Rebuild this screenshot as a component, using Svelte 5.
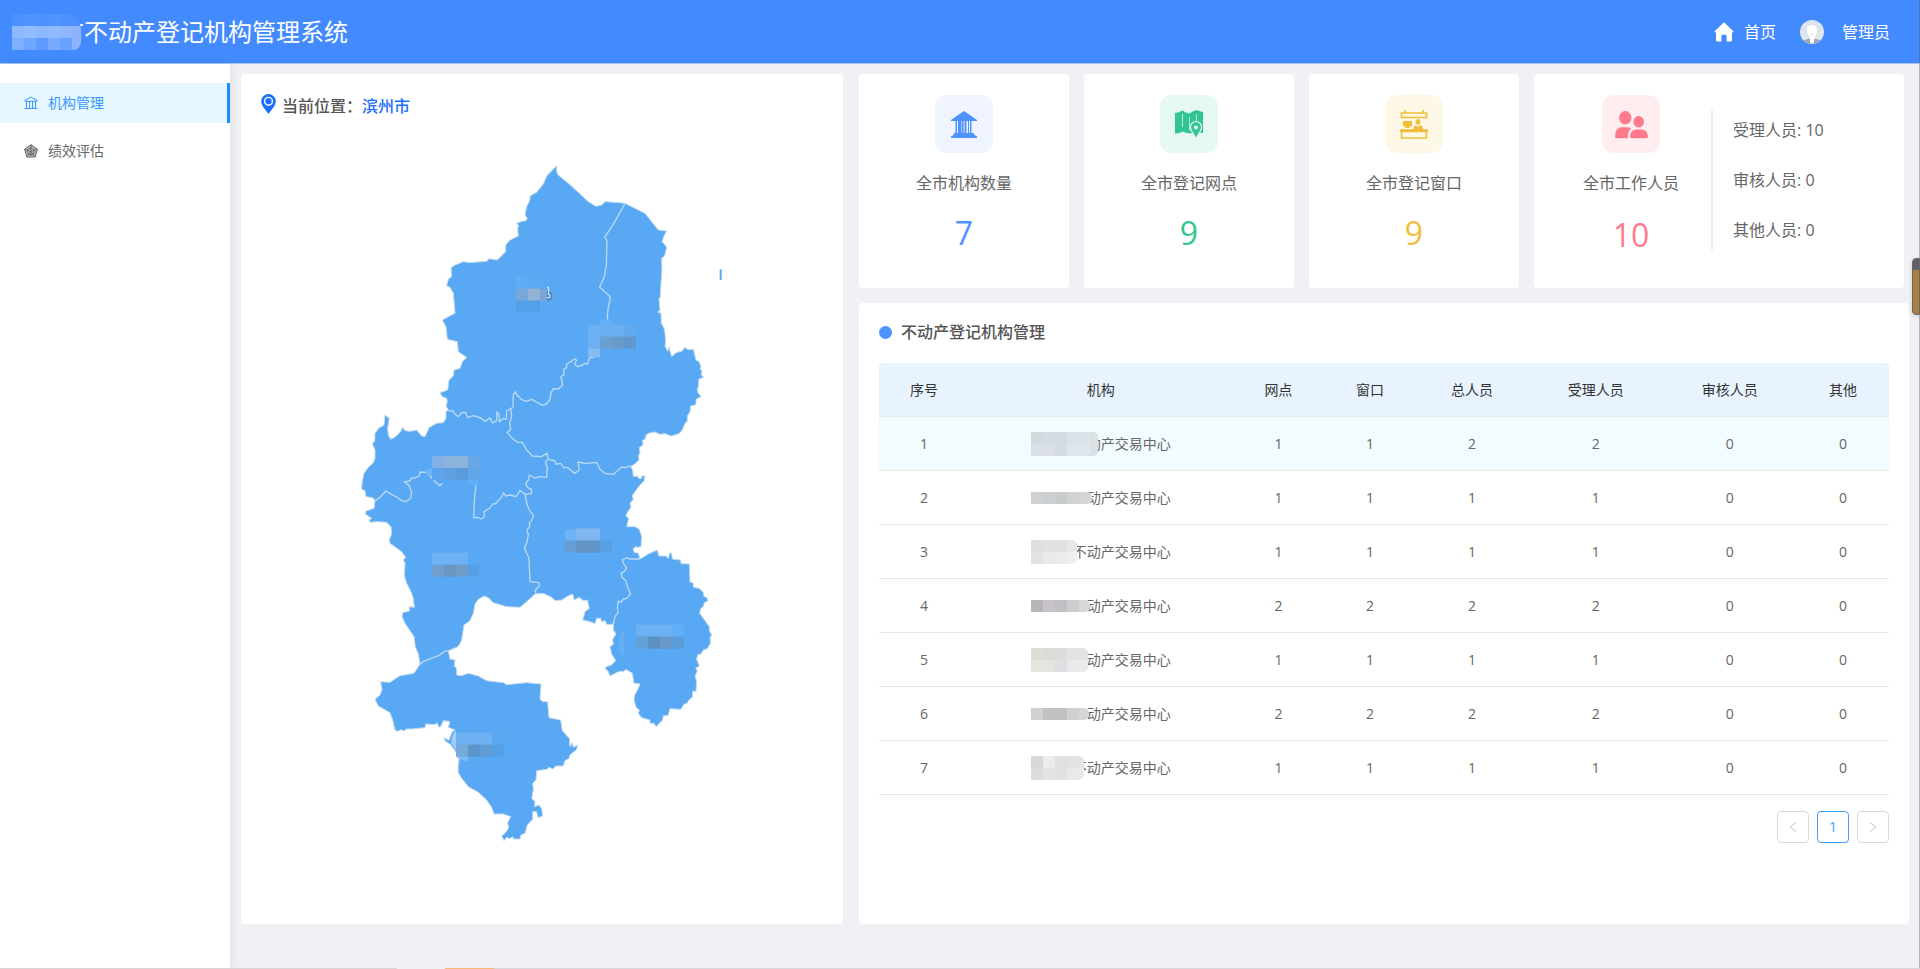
<script>
  const columns = [
    { label: '序号', width: 90 },
    { label: '机构', width: 263 },
    { label: '网点', width: 92 },
    { label: '窗口', width: 91 },
    { label: '总人员', width: 113 },
    { label: '受理人员', width: 134 },
    { label: '审核人员', width: 134 },
    { label: '其他', width: 92 }
  ];
  const tableWidth = columns.reduce((sum, c) => sum + c.width, 0);

  // Each institution name starts with a masked part: tile colours by line, and its width.
  const rows = [
    { name: '动产交易中心', mask: 67, tiles: [['#d3dade', '#d5dce1', '#d2dae2', '#dae1e8', '#dbe3e8', '#d8e0e4'], ['#d8dfe5', '#dae0e6', '#d3dbe4', '#dee5ec', '#dfe6ec', '#d8e0e4']], values: [1, 1, 2, 2, 0, 0] },
    { name: '动产交易中心', mask: 61, tiles: [['#cfd0cf', '#cacfd2', '#c9cccd', '#d2d2d2', '#d4d5d5', '#dcdddd']], values: [1, 1, 1, 1, 0, 0] },
    { name: '不动产交易中心', mask: 46, tiles: [['#e0dee0', '#e1e1e1', '#e1e2e0', '#e7e7e7'], ['#e2e2e3', '#e9e9ec', '#ebebee', '#efeff0']], values: [1, 1, 1, 1, 0, 0] },
    { name: '动产交易中心', mask: 59, tiles: [['#bab6b8', '#c8c2cb', '#bfc0c3', '#cccdcf', '#d6d7d9']], values: [2, 2, 2, 2, 0, 0] },
    { name: '动产交易中心', mask: 57, tiles: [['#deded9', '#dcdcd7', '#dddddc', '#e3e3e5', '#e3e3e3'], ['#e6e6e0', '#e4e5dd', '#dfdee2', '#eaeaed', '#ebebec']], values: [1, 1, 1, 1, 0, 0] },
    { name: '动产交易中心', mask: 58, tiles: [['#d0d0d0', '#c2c2c3', '#c1c1c2', '#d0d0d1', '#d6d7d8']], values: [2, 2, 2, 2, 0, 0] },
    { name: '不动产交易中心', mask: 53, tiles: [['#dbd7d9', '#ececee', '#e1dfe0', '#e2e2e2', '#e4e4e4'], ['#dfdadd', '#e4e3e4', '#e1e1e1', '#e9e9eb', '#eaeaeb']], values: [1, 1, 1, 1, 0, 0] }
  ];

  const titleTiles = [
    ['#4c90ff', '#5092ff', '#4f92ff', '#5294ff', '#4f91ff', '#4d8fff'],
    ['#8fb9ff', '#94bcff', '#8cb8ff', '#92bbff', '#8fb7ff', '#8db3fb'],
    ['#7eb0ff', '#6fa6ff', '#5f9bff', '#78abff', '#6aa2ff', '#8fb3fa']
  ];

  const mapTiles = [
    [528, 378, 36, 38, '#5eaef5'], [564, 378, 46, 38, '#5ba9f2'],
    [528, 416, 36, 36, '#76a9da'], [564, 416, 36, 36, '#93b3d5'], [600, 416, 20, 36, '#7ba6d4'],
    [528, 452, 72, 34, '#53a0e8'],
    [780, 508, 36, 16, '#66aff4'], [744, 524, 36, 72, '#6db1f4'], [780, 524, 72, 36, '#6aaff2'], [852, 524, 36, 36, '#62a9ee'],
    [780, 560, 36, 36, '#6a9fd0'], [816, 560, 36, 36, '#679bcc'], [852, 560, 36, 36, '#6097cc'], [744, 596, 36, 26, '#84bcf3'],
    [276, 918, 36, 36, '#82b2e5'], [312, 918, 72, 36, '#8bb3dc'], [384, 918, 36, 36, '#69a8e3'],
    [258, 956, 18, 20, '#71b4f5'], [276, 954, 36, 36, '#5ca5ec'], [312, 954, 36, 36, '#5fa0dd'], [348, 954, 36, 36, '#5a9cdb'], [384, 954, 36, 36, '#5fa6e8'], [384, 990, 30, 16, '#62aef5'],
    [276, 1208, 108, 36, '#6db2f5'], [276, 1244, 36, 36, '#719fcd'], [312, 1244, 36, 36, '#6b96c2'], [348, 1244, 36, 36, '#709cc8'], [384, 1244, 32, 36, '#569fe2'],
    [676, 1138, 32, 34, '#6fb3f5'], [708, 1135, 72, 37, '#80b7ee'], [780, 1135, 36, 37, '#5aa8f2'],
    [672, 1172, 36, 36, '#669fd6'], [708, 1172, 72, 36, '#6295c6'], [780, 1172, 36, 36, '#57a0e4'],
    [888, 1424, 108, 36, '#6cb1f4'], [996, 1424, 36, 36, '#62adf4'],
    [888, 1460, 36, 36, '#64a0d9'], [924, 1460, 36, 36, '#5c91c0'], [960, 1460, 36, 36, '#6899cb'], [996, 1460, 36, 36, '#5c9cd9'],
    [348, 1748, 108, 36, '#6fb2f3'], [456, 1748, 36, 36, '#5ba8f0'],
    [348, 1784, 36, 36, '#73aad8'], [384, 1784, 36, 36, '#5a96cb'], [420, 1784, 36, 36, '#609cd3'], [456, 1784, 36, 36, '#559fe3']
  ];
</script>

{#snippet mosaic(tiles, width)}
  <svg class="mosaic" width={width} height={tiles.length * 12} aria-hidden="true">
    {#each tiles as line, y}
      {#each line as fill, x}
        <rect x={x * 12} y={y * 12} width="12" height="12" {fill} shape-rendering="crispEdges" />
      {/each}
    {/each}
  </svg>
{/snippet}

<div class="app">
  <header>
    <h1>
      <span class="title-mask">{@render mosaic(titleTiles, 69)}</span>市不动产登记机构管理系统
    </h1>
    <nav class="top-nav">
      <a class="home" href="#home">
        <svg width="20" height="20" viewBox="0 0 20 20" aria-hidden="true">
          <path d="M10 0.3 19.4 9.3 18.8 10.6H18V18.2Q18 19.6 16.6 19.6H12.6V14.2Q12.6 12.8 11.3 12.8H8.7Q7.4 12.8 7.4 14.2V19.6H3.4Q2 19.6 2 18.2V10.6H1.2L0.6 9.3Z" fill="#fff" />
        </svg>
        首页
      </a>
      <a class="user" href="#user">
        <svg width="24" height="24" viewBox="0 0 24 24" aria-hidden="true">
          <circle cx="12" cy="12" r="12" fill="#dce6ec" />
          <path d="M3.7 20.6Q7 18.5 12 18.5T20.3 20.6Q16.500 24 12 24T3.700 20.600Z" fill="#9aa5ad" />
          <path d="M7 11Q6.500 5.500 11 5.200Q15.500 4.500 16.800 8.500Q17.500 14 14.500 17L14 22 12 24 10 22V17.500Q7.500 15.500 7 11Z" fill="#fff" />
          <circle cx="12" cy="14.500" r="1.300" fill="#dce6ec" />
        </svg>
        管理员
      </a>
    </nav>
  </header>

  <div class="body">
    <aside>
      <a class="item active" href="#org">
        <svg width="14" height="14" viewBox="0 0 14 14" fill="none" stroke="currentColor" aria-hidden="true">
          <path d="M1 5.300V4.400L7 1 13 4.400V5.300ZM2.500 5.300V12M5.500 5.300V12M8.500 5.300V12M11.500 5.300V12M0.600 12.500H13.400" />
        </svg>
        机构管理
      </a>
      <a class="item" href="#assess">
        <svg width="14" height="14" viewBox="0 0 14 14" fill="none" stroke="currentColor" aria-hidden="true">
          <path d="M7 0.600 13.400 5.200 11.200 13H2.800L0.600 5.200Z" fill="#bbb" />
          <path d="M7 3.500 10.800 6 9.500 10.500H4.500L3.200 6ZM7 1V12M1 5.300 7 7.500 13 5.300M3 12.500 7 7.500 11 12.500" stroke-width="0.900" />
        </svg>
        绩效评估
      </a>
    </aside>

    <main>
      <section class="card region">
        <h2>
          <svg width="15" height="20" viewBox="0 0 15 20" aria-hidden="true">
            <path d="M7.500 0A7.300 7.300 0 0 0 0.200 7.300C0.200 11.500 4.200 15.500 7.500 20 10.800 15.500 14.800 11.500 14.800 7.300A7.300 7.300 0 0 0 7.500 0Z" fill="#1c6eff" />
            <circle cx="7.500" cy="7.300" r="3.900" fill="none" stroke="#fff" stroke-width="1.400" />
          </svg>
          <span>当前位置：</span><span class="place">滨州市</span>
        </h2>
        <svg class="map" viewBox="0 0 1212 2100" role="img" aria-label="滨州市">
          <g fill="#58a8f4" stroke="#c3dcf0" stroke-width="3" stroke-linejoin="round">
            <path d="M650 47 650 60 652 72 664 83 690 104 718 130 745 155 768 169 776 167 785 165 795 155 825 157 855 160 885 175 915 190 935 215 955 240 980 243 973 256 966 275 973 282 980 292 974 318 965 325 966 360 963 400 961 440 957 447 960 482 953 486 963 490 964 520 972 535 975 550 977 575 975 588 983 604 987 592 995 620 1008 608 1026 603 1035 592 1044 599 1060 598 1065 618 1068 630 1078 636 1083 650 1080 657 1086 662 1084 675 1091 682 1077 687 1075 710 1072 718 1074 728 1083 740 1068 748 1068 764 1052 768 1050 785 1042 798 1042 812 1033 824 1027 840 1018 850 1005 855 995 858 975 851 960 853 945 846 928 849 918 855 916 867 908 870 909 885 898 893 900 908 896 915 897 930 885 941 872 950 878 960 880 980 892 978 897 986 905 985 905 978 915 978 912 993 900 1005 885 1025 877 1037 880 1050 870 1058 873 1072 862 1087 858 1098 866 1105 860 1130 885 1130 898 1138 905 1160 903 1190 893 1192 886 1190 879 1199 884 1208 895 1209 900 1227 925 1212 952 1200 957 1218 977 1218 985 1225 990 1208 995 1210 997 1227 1022 1230 1023 1241 1048 1242 1050 1296 1060 1300 1060 1312 1078 1315 1090 1328 1092 1340 1100 1342 1104 1352 1093 1358 1090 1370 1082 1375 1079 1390 1090 1405 1108 1430 1108 1442 1115 1455 1110 1463 1112 1478 1102 1496 1090 1500 1083 1512 1073 1514 1070 1528 1078 1548 1067 1555 1072 1562 1065 1580 1070 1592 1068 1625 1058 1623 1058 1640 1045 1652 1042 1660 1033 1662 1022 1678 990 1676 984 1697 970 1697 968 1710 948 1730 942 1720 930 1720 930 1710 905 1703 895 1690 898 1680 888 1672 882 1650 884 1635 895 1615 900 1602 882 1600 877 1570 858 1558 852 1564 835 1565 810 1578 805 1565 795 1555 803 1548 812 1547 827 1532 815 1512 810 1490 820 1483 818 1468 828 1452 820 1440 820 1422 800 1424 796 1412 784 1415 782 1405 770 1405 765 1421 750 1415 728 1410 735 1385 748 1375 742 1350 730 1352 718 1342 703 1350 698 1332 680 1340 665 1350 645 1352 635 1342 610 1330 585 1332 560 1355 540 1372 500 1370 460 1358 445 1343 432 1338 415 1348 405 1362 400 1390 390 1412 372 1425 365 1470 358 1485 350 1492 325 1502 330 1527 345 1530 343 1548 350 1555 350 1575 365 1577 385 1570 415 1578 440 1592 490 1598 500 1604 560 1598 603 1602 600 1648 608 1655 623 1655 627 1703 662 1710 667 1742 688 1765 690 1790 697 1778 700 1792 713 1785 710 1798 690 1815 687 1825 674 1833 670 1848 648 1848 638 1857 628 1852 620 1858 590 1862 588 1890 578 1900 580 1920 575 1945 585 1955 584 1970 596 1965 605 1975 608 1998 594 2003 590 1985 578 1985 578 2008 562 2025 555 2050 543 2055 540 2067 522 2067 517 2060 510 2066 500 2062 492 2072 485 2058 495 2050 506 2034 503 2018 512 2000 490 1992 462 1992 455 1972 440 1950 415 1927 385 1910 365 1885 355 1868 354 1850 358 1825 344 1800 330 1782 316 1774 312 1762 326 1771 337 1745 345 1740 325 1732 330 1715 310 1712 304 1726 298 1732 290 1718 285 1724 257 1722 255 1733 215 1737 200 1737 192 1743 184 1739 172 1744 165 1740 158 1710 150 1688 115 1668 105 1648 120 1635 126 1620 122 1595 150 1597 180 1577 222 1570 240 1542 235 1512 226 1490 222 1460 195 1420 186 1400 188 1388 208 1383 208 1370 223 1372 220 1345 213 1325 200 1300 193 1278 195 1240 190 1230 197 1222 185 1205 150 1180 148 1170 155 1150 153 1130 140 1117 112 1115 90 1117 88 1110 95 1105 76 1092 78 1083 102 1075 105 1052 98 1043 78 1040 75 1022 65 1018 66 998 72 970 85 952 100 938 105 925 105 900 97 880 104 874 105 850 116 835 132 825 135 795 148 805 143 835 145 855 152 868 165 862 182 845 188 832 195 842 210 844 230 840 245 858 255 860 268 832 290 820 310 818 318 805 318 785 325 780 318 768 322 755 320 745 307 740 300 728 323 720 327 690 340 678 342 660 360 655 367 635 380 622 355 605 352 575 322 568 318 530 307 510 325 500 345 490 340 430 330 412 320 408 325 388 335 378 333 353 345 345 370 335 388 338 440 334 447 326 472 330 497 305 497 285 510 270 535 258 533 235 536 226 530 220 545 214 558 212 562 205 555 195 560 170 570 150 570 138 590 127 610 102 620 78Z" />
            <path d="M1139 358H1145V390H1139Z" stroke="none" />
          </g>
          <g fill="none" stroke="#bcd9f2" stroke-width="4" stroke-linejoin="round">
            <path d="M855 160 840 187 818 226 795 260 801 275 799 345 793 380 779 411 811 441 803 485 802 510" />
            <path d="M765 618 757 623 750 622 742 642 733 640 728 645 713 650 703 642 710 630 703 627 692 635 680 642 680 652 671 658 672 675 663 680 668 705 655 717 640 716 633 728 630 748 620 762 607 766 590 756 575 748 560 754 543 748 538 740 532 738 526 725 520 735 519 772 500 783 499 808 490 805 478 815 477 792 470 786 470 812 458 819 450 803 436 814 420 803 400 797 383 803 377 787 365 788 355 800 342 790 340 783 325 783" />
            <path d="M512 776 515 800 509 818 512 840 501 847 520 868 532 877 547 877 560 900 577 918 605 920 621 909 625 928 645 933 648 943 662 940 672 953 684 953 703 970 718 960 714 936 738 940 770 937 780 958 795 970 820 973 845 951 855 953 872 948" />
            <path d="M621 928 617 940 622 950 620 982 600 980 584 984 568 975 566 990 557 1000 562 1012 574 1018 575 1030 556 1033 540 1022 528 1040 510 1035 498 1038 490 1028 486 1040 466 1062 460 1061 448 1075 432 1085 434 1099 425 1107 412 1102 401 1103 403 1050 408 1004" />
            <path d="M105 1052 120 1042 138 1023 155 1034 170 1041 185 1052 198 1055 212 1045 215 1028 207 1006 193 996 210 992 213 985 226 983 238 978 240 966 260 967 272 980 285 995 300 1007 307 1000" />
            <path d="M556 1033 560 1060 567 1078 580 1096 575 1112 568 1118 569 1130 561 1140 565 1155 560 1180 553 1192 560 1210 567 1225 570 1295 597 1298 598 1308 586 1320 588 1332" />
            <path d="M900 1227 868 1227 862 1223 847 1229 852 1243 860 1254 852 1265 843 1270 846 1282 858 1292 863 1312 872 1332 860 1345 850 1347 843 1357 835 1353 832 1372 834 1388 825 1400 820 1422" />
            <path d="M325 1502 312 1505 298 1516 280 1523 250 1534 240 1544" />
          </g>
          {#each mapTiles as [x, y, width, height, fill]}
            <rect {x} {y} {width} {height} {fill} />
          {/each}
          <path d="M852 1438Q832 1456 836 1488 840 1510 852 1522Z" fill="#65aff6" />
          <path d="M348 1742Q334 1752 334 1780L348 1800Z" fill="#a3cef9" />
          <path d="M348 1820H384V1833Q362 1832 348 1820Z" fill="#7dbaf5" />
          <path d="M622 420 636 428V446L622 456Z" fill="#3f78ad" opacity=".75" />
          <path d="M621 412H626V434H630V443H621" fill="none" stroke="#eef5fb" stroke-width="3" />
        </svg>
      </section>

      <div class="right">
        <div class="stats">
          <section class="card stat blue">
            <span class="badge">
              <svg width="34" height="34" viewBox="0 0 34 34" fill="currentColor" aria-hidden="true">
                <path d="M17 4 30 13V14H4V13ZM7 26H27V27.500L30 29.500V31H4V29.500L7 27.500ZM8.500 14H10V26H8.500ZM11 14H14V26H11ZM15 14H16.200V26H15ZM17.500 14H19.500V26H17.500ZM21 14H22V26H21ZM23 14H24.500V26H23Z" />
                <path d="M14.500 14H16.500V26H14.500Z" />
              </svg>
            </span>
            <h3>全市机构数量</h3>
            <strong>7</strong>
          </section>
          <section class="card stat green">
            <span class="badge">
              <svg width="34" height="34" viewBox="0 0 34 34" aria-hidden="true">
                <path d="M3 6Q7 5.500 10.500 3.500 14 6 17.500 6.500 21 3.500 25 3 28 4.500 31 5V26Q27 26 24 24.500 20 26.500 17.500 26.500 14 26 10.500 24.500 7 27 3 26.500Z" fill="currentColor" />
                <path d="M10.500 7V20M17.500 10V23.500M24.500 7V15" stroke="#b4efd9" fill="none" />
                <path d="M24 14.500A5.500 5.500 0 0 0 18.500 20.500C18.500 24 22 27 24 32 26 27 29.500 24 29.500 20.500A5.500 5.500 0 0 0 24 14.500Z" fill="currentColor" stroke="#e5f9f2" stroke-width="1.200" />
                <circle cx="24" cy="20.500" r="2" fill="#e5f9f2" />
              </svg>
            </span>
            <h3>全市登记网点</h3>
            <strong>9</strong>
          </section>
          <section class="card stat yellow">
            <span class="badge">
              <svg width="34" height="34" viewBox="0 0 34 34" aria-hidden="true">
                <path d="M4.500 6H29.500V10.500H4.500ZM8 3V6M26 3V6M4.500 24.500H29.500V31H4.500Z" fill="none" stroke="currentColor" stroke-width="1.600" />
                <path d="M6 14H15V19.500H12L13 21H8L9 19.500H6ZM3 22.300H31V24.500H3ZM16.500 22.500Q16.500 18.500 19 18.300L21 20 23 18.300Q26 18.500 26 22.500Z" fill="currentColor" />
                <ellipse cx="21" cy="14.800" rx="2.400" ry="2.900" fill="currentColor" />
              </svg>
            </span>
            <h3>全市登记窗口</h3>
            <strong>9</strong>
          </section>
          <section class="card staff">
            <div class="stat red">
              <span class="badge">
                <svg width="34" height="34" viewBox="0 0 34 34" fill="currentColor" aria-hidden="true">
                  <ellipse cx="11.300" cy="10.800" rx="6.200" ry="6.700" />
                  <ellipse cx="24.700" cy="14.700" rx="5.300" ry="5.700" />
                  <path d="M1 29.500Q1 20.300 8 20.300H12.500Q16 20.300 17 21.500 13.700 24 13.700 31.300H2.800Q1 31.300 1 29.500Z" />
                  <path d="M16 29.500Q16.500 22.500 22.500 22.500H27Q33.500 22.500 34 29.500 34 31.300 32.300 31.300H17.700Q16 31.300 16 29.500Z" />
                </svg>
              </span>
              <h3>全市工作人员</h3>
              <strong>10</strong>
            </div>
            <ul>
              <li>受理人员: 10</li>
              <li>审核人员: 0</li>
              <li>其他人员: 0</li>
            </ul>
          </section>
        </div>

        <section class="card list">
          <h2 class="dotted">不动产登记机构管理</h2>
          <table>
            <colgroup>
              {#each columns as c}
                <col style:width="{(c.width / tableWidth) * 100}%" />
              {/each}
            </colgroup>
            <thead>
              <tr>
                {#each columns as c}<th scope="col">{c.label}</th>{/each}
              </tr>
            </thead>
            <tbody>
              {#each rows as row, i}
                <tr class:hover={i === 0}>
                  <td>{i + 1}</td>
                  <td>
                    <span class="org">{row.name}<span class="org-mask">{@render mosaic(row.tiles, row.mask)}</span></span>
                  </td>
                  {#each row.values as v}<td>{v}</td>{/each}
                </tr>
              {/each}
            </tbody>
          </table>
          <nav class="pager" aria-label="分页">
            <button type="button" disabled aria-label="上一页">
              <svg width="10" height="12" viewBox="0 0 10 12" aria-hidden="true"><path d="M8 1.500 2 6 8 10.500" /></svg>
            </button>
            <button type="button" class="current">1</button>
            <button type="button" disabled aria-label="下一页">
              <svg width="10" height="12" viewBox="0 0 10 12" aria-hidden="true"><path d="M2 1.500 8 6 2 10.500" /></svg>
            </button>
          </nav>
        </section>
      </div>
    </main>
  </div>
  <div class="edge"></div>
  <div class="handle"></div>
  <div class="bottom-line"></div>
</div>

<style>
  :global(body) {
    margin: 0;
  }
  .app {
    position: relative;
    display: flex;
    flex-direction: column;
    min-height: 100vh;
    overflow: hidden;
    background: #f0f1f5;
    color: #666;
    font: 14px/22px 'Open Sans', 'Noto Sans CJK SC', sans-serif;
  }
  .app * {
    box-sizing: border-box;
  }
  h1,
  h2,
  h3,
  ul {
    margin: 0;
    padding: 0;
    font-weight: 400;
  }
  a {
    color: inherit;
    text-decoration: none;
  }
  svg {
    display: block;
    flex: none;
  }
  header {
    display: flex;
    align-items: center;
    justify-content: space-between;
    height: 64px;
    padding: 0 30px 0 12px;
    background: #448aff;
    border-bottom: 1px solid #a4c5fa;
    color: #fff;
  }
  h1 {
    position: relative;
    padding-left: 48px;
    font-size: 24px;
    line-height: 36px;
  }
  .title-mask {
    position: absolute;
    left: 0;
    top: 0;
  }
  .title-mask .mosaic {
    border-radius: 0 16px 8px 0;
  }
  .top-nav {
    display: flex;
    gap: 24px;
    font-size: 16px;
    line-height: 24px;
  }
  .home {
    display: flex;
    align-items: center;
    gap: 10px;
  }
  .user {
    display: flex;
    align-items: center;
    gap: 18px;
  }
  .body {
    display: flex;
    flex: 1;
  }
  aside {
    flex: none;
    width: 230px;
    padding-top: 19px;
    background: #fff;
    box-shadow: 2px 0 8px rgba(29, 35, 41, 0.08);
  }
  .item {
    display: flex;
    align-items: center;
    gap: 10px;
    height: 40px;
    margin-bottom: 8px;
    padding-left: 24px;
  }
  .item.active {
    background: #e6f7ff;
    border-right: 3px solid #1890ff;
    color: #3a97ff;
  }
  main {
    display: grid;
    flex: 1;
    grid-template-columns: 602fr 1050fr;
    gap: 16px;
    padding: 10px 11px 45px;
  }
  .card {
    background: #fff;
    border-radius: 4px;
  }
  .region {
    padding: 20px;
  }
  h2 {
    display: flex;
    align-items: center;
    color: #555;
    font-size: 16px;
    font-weight: 500;
    line-height: 24px;
  }
  .region h2 {
    gap: 6px;
    margin-bottom: 32px;
  }
  .region h2 svg {
    margin-top: -4px;
  }
  .region .place {
    margin-left: -6px;
    color: #1c6eff;
  }
  .map {
    width: 404px;
    max-width: 100%;
    margin: 0 auto;
  }
  .right {
    display: flex;
    flex-direction: column;
    gap: 15px;
  }
  .stats {
    display: grid;
    grid-template-columns: 210fr 210fr 210fr 370fr;
    gap: 15px;
    height: 214px;
    margin-right: 5px;
  }
  .stat {
    display: flex;
    flex-direction: column;
    align-items: center;
    padding-top: 21px;
  }
  .badge {
    display: flex;
    align-items: center;
    justify-content: center;
    width: 58px;
    height: 58px;
    border-radius: 12px;
  }
  h3 {
    margin-top: 18px;
    font-size: 16px;
    line-height: 24px;
  }
  .stat strong {
    margin-top: 16px;
    font-size: 32px;
    font-weight: 400;
    line-height: 44px;
  }
  .blue .badge {
    background: #eff4ff;
  }
  .blue .badge,
  .blue strong {
    color: #4f93ff;
  }
  .green .badge {
    background: #e5f9f2;
  }
  .green .badge,
  .green strong {
    color: #32c592;
  }
  .yellow .badge {
    background: #fef8e6;
  }
  .yellow .badge,
  .yellow strong {
    color: #f1bd3b;
  }
  .red .badge {
    background: #ffedef;
  }
  .red .badge,
  .red strong {
    color: #ff7b8b;
  }
  .staff {
    display: flex;
    padding-left: 49px;
  }
  .staff .stat strong {
    margin-top: 18px;
  }
  .staff ul {
    display: flex;
    flex-direction: column;
    justify-content: space-between;
    height: 140px;
    margin: 36px 0 0 32px;
    padding: 8px 0 8px 20px;
    border-left: 2px solid #e9ebf5;
    font-size: 16px;
    line-height: 24px;
    list-style: none;
  }
  .list {
    flex: 1;
    padding: 17px 20px 20px;
  }
  .dotted {
    gap: 9px;
    margin-bottom: 19px;
  }
  .dotted::before {
    width: 13px;
    height: 13px;
    border-radius: 50%;
    background: #4f93ff;
    content: '';
  }
  table {
    width: 100%;
    border-collapse: separate;
    border-spacing: 0;
    table-layout: fixed;
    text-align: center;
  }
  th,
  td {
    height: 54px;
    padding: 0;
    border-bottom: 1px solid #e8e8e8;
    font-weight: 400;
  }
  th {
    background: #e8f3ff;
    color: #333;
  }
  th:first-child {
    border-top-left-radius: 4px;
  }
  th:last-child {
    border-top-right-radius: 4px;
  }
  .hover td {
    background: #f2fbff;
  }
  .org {
    position: relative;
    display: inline-flex;
    align-items: center;
    justify-content: flex-end;
    width: 140px;
    vertical-align: middle;
  }
  .org-mask {
    position: absolute;
    left: 0;
  }
  .org-mask .mosaic {
    border-radius: 0 5px 5px 0;
  }
  .pager {
    display: flex;
    justify-content: flex-end;
    gap: 8px;
    margin-top: 16px;
  }
  .pager button {
    display: flex;
    align-items: center;
    justify-content: center;
    width: 32px;
    height: 32px;
    padding: 0;
    background: #fff;
    border: 1px solid #d9d9d9;
    border-radius: 4px;
    font: inherit;
  }
  .pager button.current {
    border-color: #409eff;
    color: #409eff;
  }
  .pager path {
    fill: none;
    stroke: #c4c4c4;
  }
  .edge {
    position: absolute;
    top: 0;
    right: 0;
    bottom: 0;
    width: 1px;
    background: rgba(90, 95, 105, 0.4);
  }
  .handle {
    position: absolute;
    top: 258px;
    right: 0;
    width: 8px;
    height: 57px;
    border: 1px solid #66676a;
    border-radius: 4px 0 0 4px;
    background: linear-gradient(#5f6164 11px, #a5803f 11px);
    box-shadow: 0 1px 4px rgba(0, 0, 0, 0.15);
  }
  .bottom-line {
    position: absolute;
    right: 0;
    bottom: 0;
    left: 0;
    height: 1px;
    background: linear-gradient(90deg, #d9d3d8 397px, #f0f1f5 397px 445px, #f5b877 445px 494px, #d6d7dc 494px);
  }
</style>
